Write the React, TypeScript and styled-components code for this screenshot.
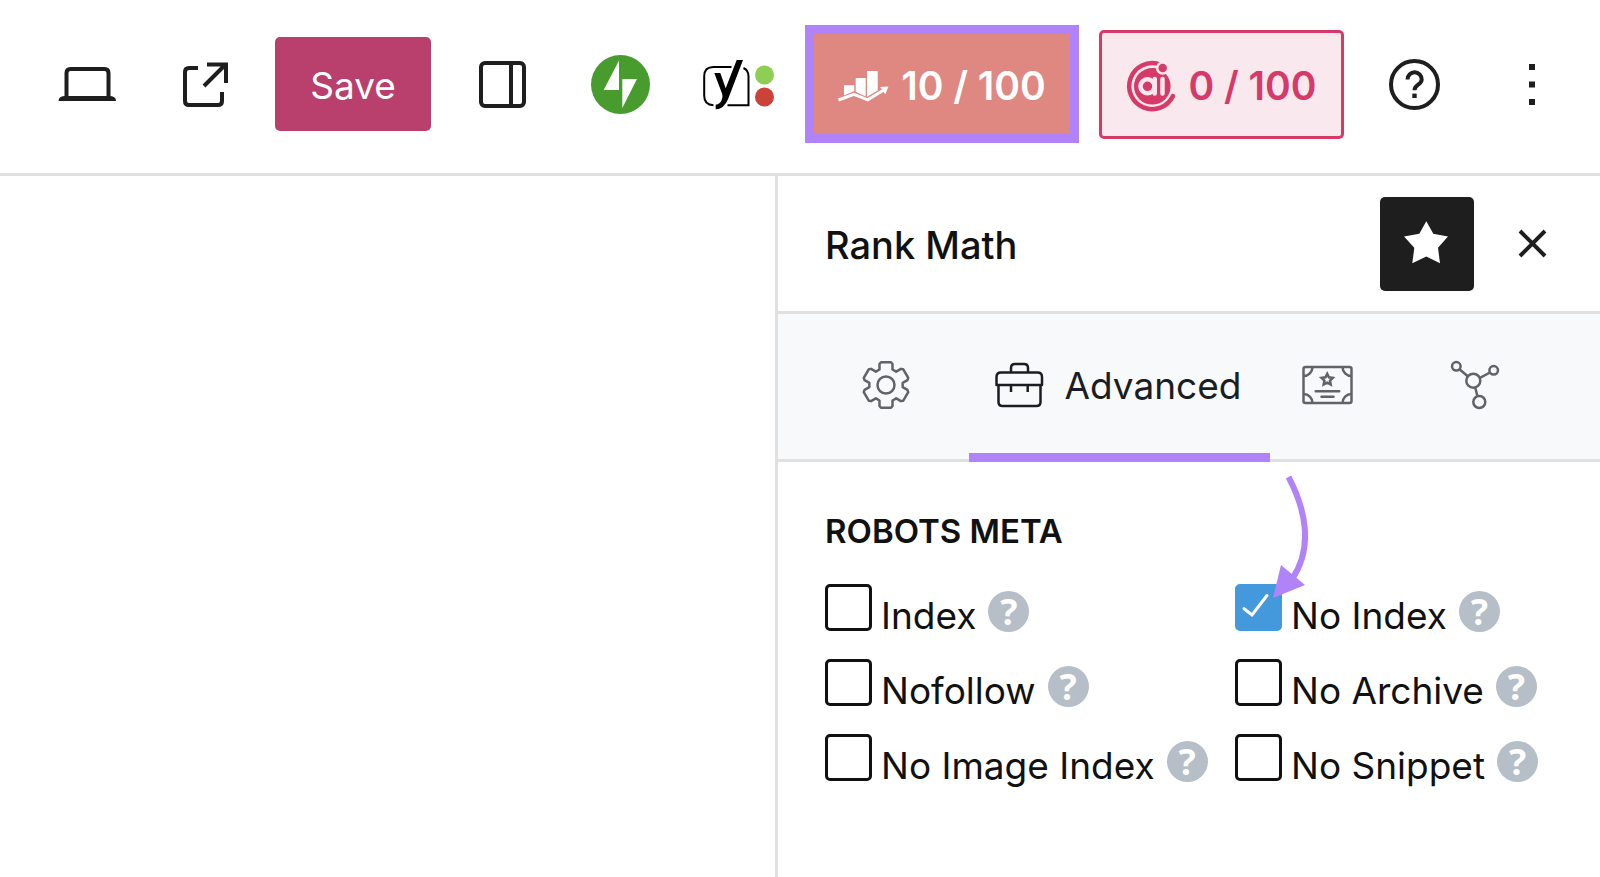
import React, { useState } from 'react';
import styled, { createGlobalStyle } from 'styled-components';

const ink = '#1e1e1e';
const line = '#e0e0e0';
const purple = '#b083f9';
const pink = '#d63a69';
const pinkPale = '#f9e8ee';

const GlobalStyle = createGlobalStyle`
  *, *::before, *::after { box-sizing: border-box; }
  body {
    margin: 0;
    background: #fff;
    color: #111;
    font-family: Inter, 'Liberation Sans', sans-serif;
  }
  button { font: inherit; color: inherit; cursor: pointer; }
  svg { display: block; flex: none; overflow: visible; }
`;

const Page = styled.div`
  display: flex;
  flex-direction: column;
  min-height: 100vh;
`;

const Header = styled.header`
  display: flex;
  align-items: center;
  justify-content: flex-end;
  gap: 20px;
  height: 176px;
  padding: 0 20px 5px 0;
  border-bottom: 3px solid ${line};
`;

const ToolGroup = styled.div<{ $inset?: boolean }>`
  display: flex;
  align-items: center;
  gap: 24px;
  margin-left: ${(p) => (p.$inset ? '4px' : '0')};
`;

const IconButton = styled.button<{ $filled?: boolean }>`
  display: flex;
  align-items: center;
  justify-content: center;
  width: 94px;
  height: 94px;
  padding: 0;
  border: 0;
  border-radius: 5px;
  background: ${(p) => (p.$filled ? ink : 'transparent')};
  color: ${(p) => (p.$filled ? '#fff' : ink)};
`;

const SaveButton = styled.button`
  width: 156px;
  height: 94px;
  padding: 3px 0 0;
  border: 0;
  border-radius: 5px;
  background: #b9406c;
  color: #fff;
  font-size: 37px;
`;

const ScoreButton = styled.button<{ $tone: 'seo' | 'ai' }>`
  display: flex;
  align-items: center;
  justify-content: center;
  gap: 12px;
  width: ${(p) => (p.$tone === 'seo' ? 274 : 245)}px;
  height: ${(p) => (p.$tone === 'seo' ? 118 : 109)}px;
  padding: 3px 0 0;
  border: ${(p) => (p.$tone === 'seo' ? `9px solid ${purple}` : `3px solid ${pink}`)};
  border-radius: ${(p) => (p.$tone === 'seo' ? 0 : 5)}px;
  background: ${(p) => (p.$tone === 'seo' ? '#df8781' : pinkPale)};
  color: ${(p) => (p.$tone === 'seo' ? '#fff' : pink)};
  font-size: 39px;
  font-weight: 600;
  white-space: nowrap;
`;

const Workspace = styled.div`
  display: flex;
  flex: 1;
`;

const Canvas = styled.main`
  flex: 1;
`;

const Sidebar = styled.aside`
  flex: 0 0 825px;
  border-left: 3px solid ${line};
`;

const PanelHeader = styled.div`
  display: flex;
  align-items: center;
  gap: 12px;
  height: 138px;
  padding: 0 20px 0 47px;
  border-bottom: 3px solid ${line};
`;

const PanelTitle = styled.h1`
  flex: 1;
  margin: 0;
  padding-top: 3px;
  font-size: 38px;
  font-weight: 500;
`;

const Tabs = styled.div`
  display: grid;
  grid-template-columns: 167fr 301px 116px 178fr;
  height: 148px;
  padding: 0 36px 0 24px;
  border-bottom: 3px solid ${line};
  background: #f8f9fb;
`;

const Tab = styled.button<{ $active?: boolean }>`
  display: flex;
  align-items: center;
  justify-content: center;
  gap: 21px;
  margin-bottom: -3px;
  padding: ${(p) => (p.$active ? '3px 4px 0 0' : '0 0 6px')};
  border: 0;
  border-bottom: ${(p) => (p.$active ? `9px solid ${purple}` : '0')};
  background: transparent;
  color: ${(p) => (p.$active ? '#1a1d21' : '#5f6468')};
  font-size: 37px;
`;

const Section = styled.section`
  padding: 49px 0 40px 47px;
`;

const SectionTitle = styled.h2`
  margin: 0 0 33px;
  font-size: 33px;
  line-height: 40px;
  font-weight: 600;
`;

const Options = styled.div`
  display: grid;
  grid-template-columns: 410px 1fr;
  row-gap: 28px;
`;

const Option = styled.div`
  display: flex;
  align-items: flex-start;
  height: 47px;
  white-space: nowrap;
`;

const CheckCell = styled.span`
  position: relative;
  display: grid;
  flex: none;
  width: 47px;
  height: 47px;
  & > * { grid-area: 1 / 1; }
`;

const Checkbox = styled.input`
  appearance: none;
  width: 47px;
  height: 47px;
  margin: 0;
  border: 3px solid #111;
  border-radius: 5px;
  background: #fff;
  &:checked {
    border-color: #4499dc;
    background: #4499dc;
  }
`;

const CheckMark = styled.svg`
  position: relative;
  pointer-events: none;
`;

const Pointer = styled.svg`
  position: absolute;
  left: 33px;
  top: -112px;
  pointer-events: none;
`;

const OptionLabel = styled.label`
  padding: 9px 12px 0 9px;
  font-size: 37px;
  line-height: 46px;
`;

const Hint = styled.button`
  display: flex;
  align-items: center;
  justify-content: center;
  width: 41px;
  height: 41px;
  margin-top: 7px;
  padding: 0;
  border: 0;
  border-radius: 50%;
  background: #b6bec8;
  color: #fff;
  font-family: 'Noto Sans', sans-serif;
  font-size: 36px;
  line-height: 41px;
  font-weight: 700;
`;

const stroke = (width: number) => ({ fill: 'none', stroke: 'currentColor', strokeWidth: width });

const LaptopIcon = () => (
  <svg width="60" height="60" viewBox="0 0 60 60">
    <path d="M10.500 43V19q0-4 4-4h34q4 0 4 4v24" {...stroke(4)} />
    <path d="M2.500 47q0-5 7-5h43.500q7 0 7 5z" fill="currentColor" />
  </svg>
);

const ExternalIcon = () => (
  <svg width="60" height="60" viewBox="0 0 60 60" {...stroke(4)}>
    <path d="M24 14h-9q-4 0-4 4v29q0 4 4 4h29q4 0 4-4v-9" />
    <path d="M33 10.500h19v18.500M30 32l21-21" />
  </svg>
);

const SidebarIcon = () => (
  <svg width="60" height="60" viewBox="0 0 60 60" {...stroke(4)}>
    <rect x="9" y="9" width="43" height="43" rx="4" />
    <path d="M39 9v43" />
  </svg>
);

const JetpackIcon = () => (
  <svg width="60" height="60" viewBox="0 0 60 60">
    <circle cx="30.500" cy="30.500" r="29.500" fill="#489c2d" />
    <path d="M29 6.500V36H13.700zM32.300 54V25H47z" fill="#fff" />
  </svg>
);

const YoastIcon = () => (
  <svg width="80" height="60" viewBox="0 0 80 60">
    <path
      d="M33.500 13H15.500q-9.300 0-9.300 9.300v19.500q0 9.200 9.300 9.400M45.500 14q5 2 5 8.500v28.700H29.500"
      fill="none"
      stroke="#000"
      strokeWidth="2"
    />
    <path
      d="M16.300 19h6l5.400 15.300L38.700 6H45L30.300 44.500Q26 55.300 17.700 55.300v-4.600q4.300-.4 6-4.700 1.200-3 .6-5.700z"
      fill="#000"
    />
    <circle cx="66.500" cy="21" r="9.500" fill="#8fce55" />
    <circle cx="66.500" cy="43" r="9.500" fill="#cb4239" />
  </svg>
);

const ChartIcon = () => (
  <svg width="51" height="34" viewBox="0 0 51 34">
    <path
      d="M6 16.300h10.300v5.700L6 26.500zM17.700 9h10v18.500l-10-4.700zM29 2h10.700v19.500L29 27.700z"
      fill="currentColor"
    />
    <path d="M.5 31L16 25.300l13.700 5.500L45 21.500" {...stroke(3)} />
    <path d="M42 18l8.500-.5-3.200 7.700z" fill="currentColor" />
  </svg>
);

const ContentAiIcon = () => (
  <svg width="50" height="52" viewBox="0 0 50 52">
    <circle cx="26.300" cy="26.300" r="18.300" fill={pink} />
    <path d="M33 4.200A23 23 0 1 0 47 36" fill="none" stroke={pink} strokeWidth="4.500" strokeLinecap="round" />
    <circle cx="36.700" cy="8" r="5.500" fill={pink} stroke={pinkPale} strokeWidth="2.500" />
    <g fill="none" stroke={pinkPale} strokeWidth="4.500" strokeLinecap="round">
      <circle cx="21.500" cy="26.300" r="7" />
      <path d="M28.700 19v14.500M36.500 19v14.500" />
    </g>
  </svg>
);

const HelpIcon = () => (
  <svg width="60" height="60" viewBox="0 0 60 60">
    <g {...stroke(4)}>
      <circle cx="29.500" cy="30.500" r="23.500" />
      <path d="M22.500 25.500a7 7.200 0 0 1 14.200 0c0 5.500-7.200 5-7.200 10.700" />
    </g>
    <path d="M27.300 39.600h4.400v4.400h-4.400z" fill="currentColor" />
  </svg>
);

const MoreIcon = () => (
  <svg width="60" height="60" viewBox="0 0 60 60" fill="currentColor">
    <path d="M26 10h6v6h-6zM26 27.500h6v6h-6zM26 45h6v6h-6z" />
  </svg>
);

const StarIcon = () => (
  <svg width="60" height="60" viewBox="0 0 60 60" fill="currentColor">
    <path d="M29.300 7.200l7 12.600L51 22.500 41 33.800l2 15.400-13.700-6.700-14 6.700 2-15.400L7 22.500l15.300-2.700z" />
  </svg>
);

const CloseIcon = () => (
  <svg width="60" height="60" viewBox="0 0 60 60" {...stroke(4)}>
    <path d="M17 17l25 25M42 17L17 42" />
  </svg>
);

const gearPoints = [0, 60, 120, 180, 240, 300]
  .flatMap((deg) => {
    const a = (deg * Math.PI) / 180;
    return [[-6.5, -15.5], [-6.5, -21], [-5, -22.8], [5, -22.8], [6.5, -21], [6.5, -15.5]].map(
      ([x, y]) =>
        `${(x * Math.cos(a) - y * Math.sin(a)).toFixed(2)},${(x * Math.sin(a) + y * Math.cos(a)).toFixed(2)}`,
    );
  })
  .join(' ');

const GearIcon = () => (
  <svg width="52" height="52" viewBox="-26 -26 52 52" {...stroke(2.5)} strokeLinejoin="round">
    <polygon points={gearPoints} />
    <circle r="8.500" />
  </svg>
);

const ToolboxIcon = () => (
  <svg width="50" height="50" viewBox="0 0 50 50" {...stroke(2.5)} strokeLinejoin="round">
    <path d="M17 12.500V8q0-4 4-4h9q4 0 4 4v4.500" />
    <path d="M2.500 25v-8q0-4.500 4.500-4.500h36.500q4.500 0 4.500 4.500v8z" />
    <path d="M4.500 25v17q0 4 4 4h34q4 0 4-4V25M17 25v7M33.700 25v7" />
  </svg>
);

const CertificateIcon = () => (
  <svg width="52" height="40" viewBox="0 0 52 40" {...stroke(2.5)}>
    <rect x="1.500" y="2" width="48" height="36" rx="2" />
    <path d="M10.500 2a9 9 0 0 1-9 9M40.500 2a9 9 0 0 0 9 9M10.500 38a9 9 0 0 0-9-9M40.500 38a9 9 0 0 1 9-9" />
    <path d="M25.200 8.800l1.700 3.500 3.900.6-2.800 2.700.7 3.800-3.500-1.800-3.500 1.800.7-3.800-2.800-2.700 3.900-.6z" />
    <path d="M13.700 26.300h23.500M19.500 31.700h12" strokeLinecap="round" />
  </svg>
);

const SchemaIcon = () => (
  <svg width="50" height="50" viewBox="0 0 50 50" {...stroke(2.5)}>
    <circle cx="6.300" cy="6.300" r="4.300" />
    <circle cx="43.700" cy="10.300" r="4.300" />
    <circle cx="23.300" cy="20.700" r="7" />
    <circle cx="29.300" cy="42" r="6" />
    <path d="M9.500 9.300l8.500 7.200M40 12.500l-10.500 5.700M25.200 27.500l2.200 8.500" />
  </svg>
);

const options = [
  { id: 'index', label: 'Index' },
  { id: 'noindex', label: 'No Index' },
  { id: 'nofollow', label: 'Nofollow' },
  { id: 'noarchive', label: 'No Archive' },
  { id: 'noimageindex', label: 'No Image Index' },
  { id: 'nosnippet', label: 'No Snippet' },
];

export default function App() {
  const [checked, setChecked] = useState<string[]>(['noindex']);
  const toggle = (id: string) =>
    setChecked((now) => (now.includes(id) ? now.filter((x) => x !== id) : [...now, id]));

  return (
    <Page>
      <GlobalStyle />
      <Header>
        <ToolGroup>
          <IconButton aria-label="View"><LaptopIcon /></IconButton>
          <IconButton aria-label="View post"><ExternalIcon /></IconButton>
          <SaveButton>Save</SaveButton>
          <IconButton aria-label="Settings"><SidebarIcon /></IconButton>
          <IconButton aria-label="Jetpack"><JetpackIcon /></IconButton>
          <IconButton aria-label="Yoast SEO"><YoastIcon /></IconButton>
        </ToolGroup>
        <ScoreButton $tone="seo"><ChartIcon />10 / 100</ScoreButton>
        <ScoreButton $tone="ai"><ContentAiIcon />0 / 100</ScoreButton>
        <ToolGroup $inset>
          <IconButton aria-label="Help"><HelpIcon /></IconButton>
          <IconButton aria-label="Options"><MoreIcon /></IconButton>
        </ToolGroup>
      </Header>
      <Workspace>
        <Canvas />
        <Sidebar>
          <PanelHeader>
            <PanelTitle>Rank Math</PanelTitle>
            <IconButton $filled aria-label="Unpin from toolbar"><StarIcon /></IconButton>
            <IconButton aria-label="Close plugin"><CloseIcon /></IconButton>
          </PanelHeader>
          <Tabs role="tablist">
            <Tab role="tab" aria-label="General"><GearIcon /></Tab>
            <Tab role="tab" aria-selected $active><ToolboxIcon />Advanced</Tab>
            <Tab role="tab" aria-label="Schema"><CertificateIcon /></Tab>
            <Tab role="tab" aria-label="Social"><SchemaIcon /></Tab>
          </Tabs>
          <Section>
            <SectionTitle>ROBOTS META</SectionTitle>
            <Options>
              {options.map(({ id, label }) => (
                <Option key={id}>
                  <CheckCell>
                    <Checkbox
                      type="checkbox"
                      id={id}
                      checked={checked.includes(id)}
                      onChange={() => toggle(id)}
                    />
                    {checked.includes(id) && (
                      <CheckMark width="47" height="47" viewBox="0 0 47 47">
                        <path d="M9 24.700l8 6.300L32 11.500" fill="none" stroke="#fff" strokeWidth="3" strokeLinecap="round" />
                      </CheckMark>
                    )}
                    {id === 'noindex' && (
                      <Pointer width="44" height="128" viewBox="0 0 44 128">
                        <path d="M20.500 5C37 36 46 75 24 107" fill="none" stroke={purple} strokeWidth="6" />
                        <path d="M5 126l8-33 24 20z" fill={purple} />
                      </Pointer>
                    )}
                  </CheckCell>
                  <OptionLabel htmlFor={id}>{label}</OptionLabel>
                  <Hint aria-label={`About ${label}`}>?</Hint>
                </Option>
              ))}
            </Options>
          </Section>
        </Sidebar>
      </Workspace>
    </Page>
  );
}
